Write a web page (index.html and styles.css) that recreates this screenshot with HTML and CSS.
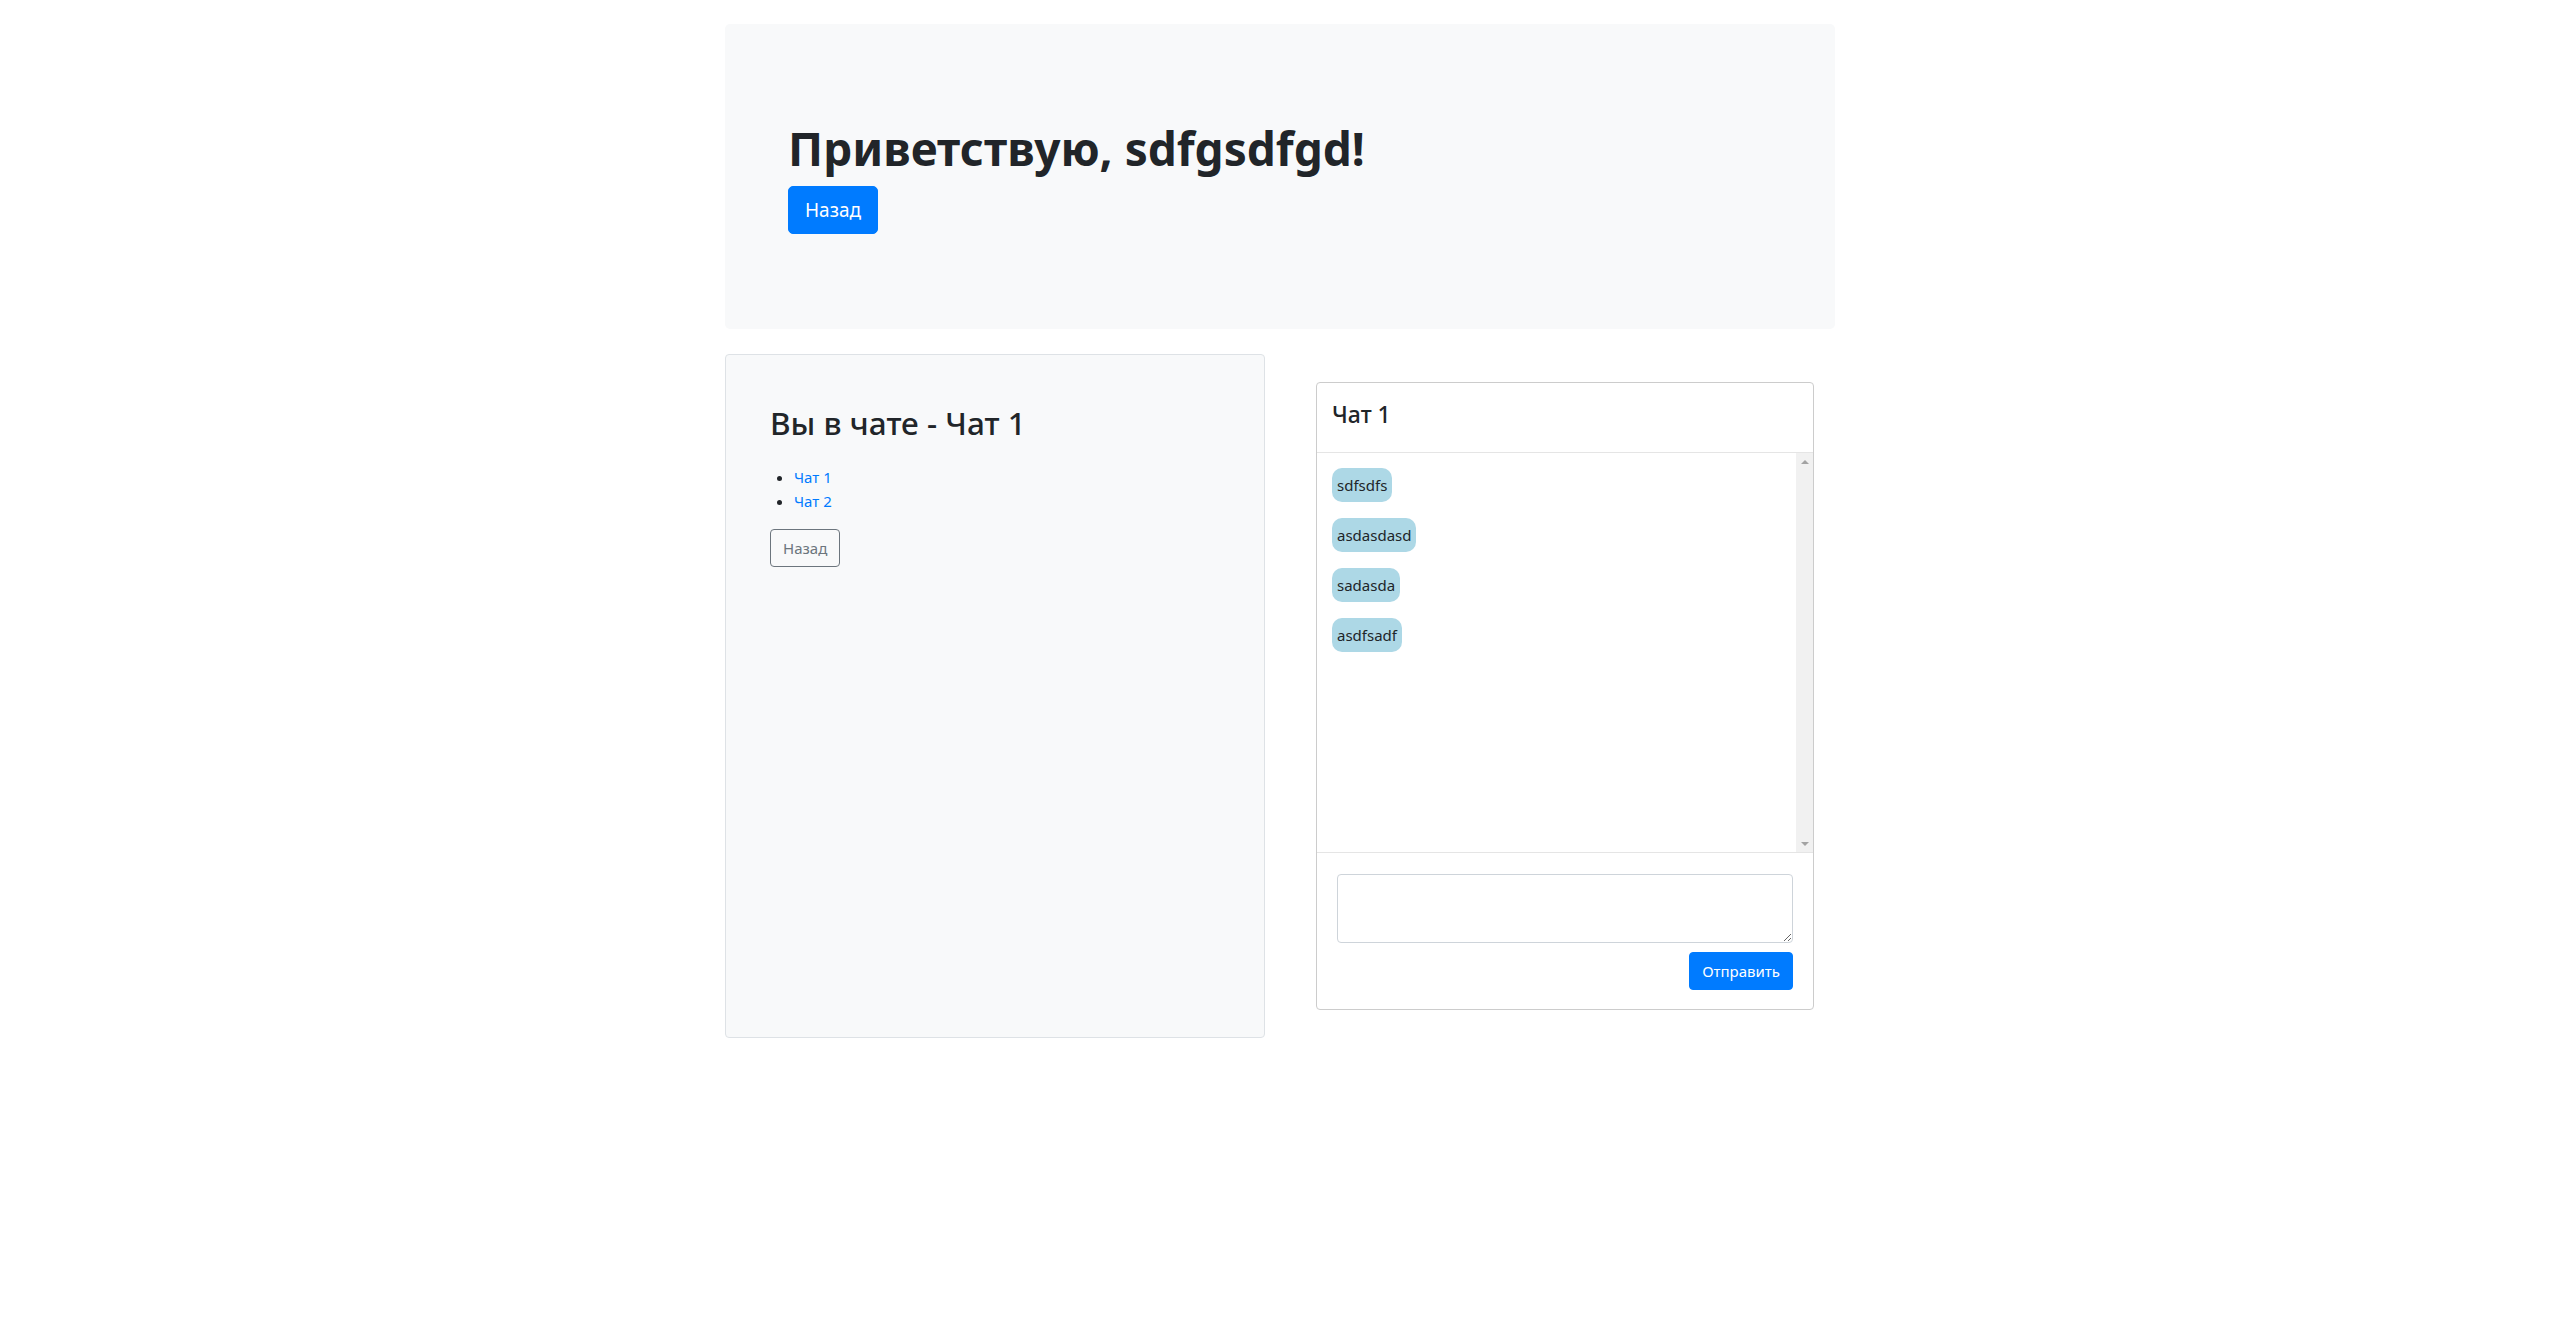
FILE: index.html
```html
<!DOCTYPE html>
<html lang="ru">
<head>
<meta charset="utf-8">
<title>Чат</title>
<link rel="stylesheet" href="styles.css">
</head>
<body>
<div class="container">
  <div class="jumbotron">
    <h1 class="greet">Приветствую, sdfgsdfgd!</h1>
    <a class="btn btn-primary btn-lg" href="#">Назад</a>
  </div>
  <div class="row">
    <div class="col-left">
      <div class="rooms">
        <h2 class="rooms-title">Вы в чате - Чат 1</h2>
        <ul class="room-list">
          <li><a href="#">Чат 1</a></li>
          <li><a href="#">Чат 2</a></li>
        </ul>
        <a class="btn btn-outline" href="#">Назад</a>
      </div>
    </div>
    <div class="col-right">
      <div class="chat">
        <div class="chat-header"><h4 class="chat-title">Чат 1</h4></div>
        <div class="messages">
          <div class="msg-list">
            <span class="bubble">sdfsdfs</span>
            <span class="bubble">asdasdasd</span>
            <span class="bubble">sadasda</span>
            <span class="bubble">asdfsadf</span>
          </div>
          <div class="scrollbar">
            <span class="arrow"><span class="tri tri-up"></span></span>
            <span class="arrow"><span class="tri tri-down"></span></span>
          </div>
        </div>
        <div class="chat-footer">
          <textarea class="input"></textarea>
          <div class="actions"><button class="btn btn-primary">Отправить</button></div>
        </div>
      </div>
    </div>
  </div>
</div>
</body>
</html>
```
FILE: styles.css
```css
* { box-sizing: border-box; }
body {
  margin: 0;
  font-family: "Noto Sans", "Open Sans", sans-serif;
  font-size: 15px;
  line-height: 24px;
  color: #212529;
  background: #fff;
}
.container {
  width: 1110px;
  margin: 0 auto;
}
.jumbotron {
  margin-top: 24px;
  margin-bottom: 25px;
  padding: 96px 63px 95px;
  background: #f8f9fa;
  border-radius: 5px;
}
.greet {
  margin: 0 0 8px;
  font-size: 46px;
  font-weight: 700;
  line-height: 57.6px;
}
.btn {
  display: inline-block;
  font-family: inherit;
  font-size: 15px;
  line-height: 24px;
  padding: 6px 12px;
  border: 1px solid transparent;
  border-radius: 4px;
  text-decoration: none;
  cursor: pointer;
}
.btn-primary {
  background: #007bff;
  border-color: #007bff;
  color: #fff;
}
.btn-lg {
  font-size: 19px;
  line-height: 30px;
  padding: 8px 16px;
  border-radius: 5px;
}
.btn-outline {
  color: #6c757d;
  border-color: #6c757d;
  background: transparent;
}
.row {
  display: flex;
}
.col-left {
  width: 540px;
  display: flex;
}
.rooms {
  flex: 1;
  background: #f8f9fa;
  border: 1px solid #dee2e6;
  border-radius: 4px;
  padding: 49px 44px 44px;
}
.rooms-title {
  margin: 0 0 23px;
  font-size: 31.5px;
  font-weight: 500;
  line-height: 38.4px;
}
.room-list {
  margin: 0 0 16px;
  padding-left: 24px;
}
.room-list li::marker {
  color: #212529;
}
.room-list a {
  color: #007bff;
  text-decoration: none;
}
.col-right {
  margin-left: 30px;
  width: 540px;
  padding: 28px 21px;
}
.chat {
  border: 1px solid #ccc;
  border-radius: 4px;
  background: #fff;
}
.chat-header {
  padding: 17px 15px 16px;
  border-bottom: 1px solid #e5e5e5;
}
.chat-title {
  margin: 0 0 8px;
  font-size: 23px;
  font-weight: 500;
  line-height: 28.8px;
}
.messages {
  height: 400px;
  display: flex;
  border-bottom: 1px solid #e5e5e5;
}
.msg-list {
  flex: 1;
  padding: 15px 15px;
  display: flex;
  flex-direction: column;
  align-items: flex-start;
  gap: 16px;
}
.scrollbar {
  width: 17px;
  background: #f1f1f1;
  display: flex;
  flex-direction: column;
  justify-content: space-between;
}
.arrow {
  height: 17px;
  display: flex;
  align-items: center;
  justify-content: center;
}
.tri {
  width: 0;
  height: 0;
  border-left: 4px solid transparent;
  border-right: 4px solid transparent;
}
.tri-up {
  border-bottom: 4px solid #a3a3a3;
}
.tri-down {
  border-top: 4px solid #a3a3a3;
}
.bubble {
  background: #add8e6;
  border-radius: 10px;
  padding: 5px;
  line-height: 24px;
  font-size: 15px;
}
.chat-footer {
  padding: 21px 20px 19px;
}
.input {
  display: block;
  width: 100%;
  height: 69px;
  border: 1px solid #ced4da;
  border-radius: 4px;
  font-family: inherit;
  font-size: 15px;
  padding: 6px 12px;
}
.actions {
  display: flex;
  justify-content: flex-end;
  margin-top: 9px;
}
```
